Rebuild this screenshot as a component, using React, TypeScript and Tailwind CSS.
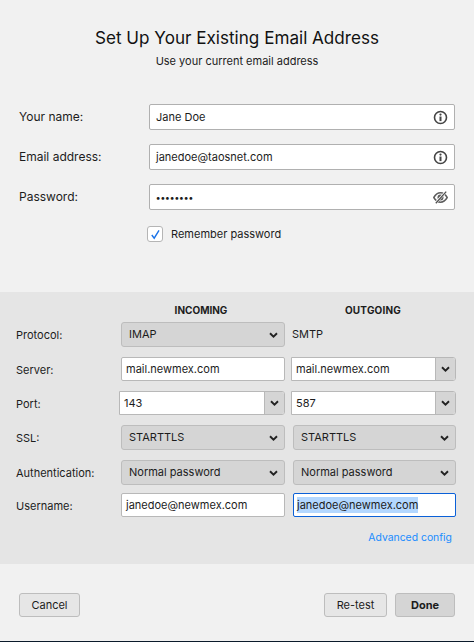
import React from "react";

const Chev = () => (
  <svg width="9" height="6" viewBox="0 0 9 6" className="shrink-0">
    <path d="M1 1.2 L4.5 4.6 L8 1.2" fill="none" stroke="#222" strokeWidth="1.9" />
  </svg>
);

const Info = () => (
  <svg width="15" height="15" viewBox="0 0 15 15" className="shrink-0">
    <circle cx="7.5" cy="7.5" r="6" fill="none" stroke="#444" strokeWidth="1.6" />
    <circle cx="7.5" cy="4.6" r="1.1" fill="#444" />
    <rect x="6.5" y="6.5" width="2" height="4.6" fill="#444" />
  </svg>
);

const EyeOff = () => (
  <svg width="15" height="13" viewBox="0 0 15 13" className="shrink-0">
    <path d="M0.8 6.5 C3 2.8 5.3 1.8 7.5 1.8 C9.7 1.8 12 2.8 14.2 6.5 C12 10.2 9.7 11.2 7.5 11.2 C5.3 11.2 3 10.2 0.8 6.5 Z" fill="none" stroke="#5c5c5c" strokeWidth="1.5" />
    <circle cx="7.5" cy="6.5" r="3" fill="#5c5c5c" />
    <path d="M2.4 12.4 L13 0.6" stroke="#fff" strokeWidth="2.4" />
    <path d="M2.8 12.2 L13.2 0.6" stroke="#4f4f4f" strokeWidth="1.3" />
  </svg>
);

const TopField = ({ label, value, icon, mt }: { label: string; value: React.ReactNode; icon: React.ReactNode; mt: string }) => (
  <div className={`flex items-center ${mt}`}>
    <div className="w-[130px] -mt-[1px] text-[12px] text-[#1c1c1c]">{label}</div>
    <div className="flex h-[26px] w-[306px] items-center justify-between rounded-[2px] border border-[#b0b0b0] bg-white pl-[6px] pr-[6px] text-[11px] text-[#1c1c1c]">
      <span>{value}</span>
      {icon}
    </div>
  </div>
);

const Select = ({ value, w = "w-[164px]" }: { value: string; w?: string }) => (
  <div className={`flex h-[25px] ${w} items-center justify-between rounded-[3px] border border-[#bdbdbd] bg-[#d5d5d5] pl-[7px] pr-[6px] text-[11px] text-[#1c1c1c]`}>
    <span>{value}</span>
    <Chev />
  </div>
);

const TextBox = ({ value, w = "w-[164px]" }: { value: string; w?: string }) => (
  <div className={`flex h-[24px] ${w} items-center rounded-[2px] border border-[#b8b8b8] bg-white pl-[4px] text-[11px] text-[#1c1c1c]`}>
    <span className="mt-[1px]">{value}</span>
  </div>
);

const Combo = ({ value, w }: { value: string; w: string }) => (
  <div className={`flex h-[24px] ${w} items-center overflow-hidden rounded-r-[3px] border border-[#b8b8b8] bg-white text-[11px] text-[#1c1c1c]`}>
    <span className="mt-[1px] flex-1 pl-[4px]">{value}</span>
    <span className="flex h-[24px] w-[20px] items-center justify-center border-l border-[#b8b8b8] bg-[#d5d5d5]">
      <Chev />
    </span>
  </div>
);

const Row = ({ label, children, h, mt }: { label: string; children: React.ReactNode; h: string; mt: string }) => (
  <div className={`flex ${h} ${mt} items-center`}>
    <div className="mt-[2px] w-[103px] pl-[16px] text-[11px] text-[#1c1c1c]">{label}</div>
    {children}
  </div>
);

const Btn = ({ children, w, bold, dark }: { children: string; w: string; bold?: boolean; dark?: boolean }) => (
  <div className={`flex h-[24px] ${w} items-center justify-center rounded-[3px] border border-[#bdbdbd] text-[11px] text-[#1c1c1c] ${dark ? "bg-[#d5d5d5]" : "bg-[#e6e6e6]"} ${bold ? "font-bold" : ""}`}>
    <span className="mt-[1px]">{children}</span>
  </div>
);

export default function App() {
  return (
    <div className="flex h-[642px] w-[474px] flex-col overflow-hidden border-b border-[#0b1a2b] bg-[#f1f1f1] font-['Inter',sans-serif]">
      <div className="h-[292px] shrink-0 pl-[19px] pt-[27px]">
        <div className="-ml-[19px] text-center text-[17.1px] leading-[22px] text-[#111]">Set Up Your Existing Email Address</div>
        <div className="-ml-[19px] mt-[5px] text-center text-[11px] leading-[14px] text-[#1c1c1c]">Use your current email address</div>
        <TopField mt="mt-[36px]" label="Your name:" value="Jane Doe" icon={<Info />} />
        <TopField mt="mt-[14px]" label="Email address:" value="janedoe@taosnet.com" icon={<Info />} />
        <TopField
          mt="mt-[14px]"
          label="Password:"
          value={<span className="text-[9px] font-bold tracking-[0.4px]">••••••••</span>}
          icon={<EyeOff />}
        />
        <div className="ml-[128px] mt-[16px] flex items-center">
          <div className="flex h-[16px] w-[16px] items-center justify-center rounded-[3px] border border-[#b5b5b5] bg-white">
            <svg width="11" height="11" viewBox="0 0 11 11">
              <path d="M1.8 6 L4.2 9.2 L9 1.4" fill="none" stroke="#1a73e8" strokeWidth="1.4" />
            </svg>
          </div>
          <span className="ml-[8px] text-[11px] text-[#1c1c1c]">Remember password</span>
        </div>
      </div>

      <div className="h-[272px] shrink-0 bg-[#e5e5e5] pt-[11px]">
        <div className="flex h-[14px] items-center text-[10px] font-bold leading-[14px] text-[#1c1c1c]">
          <div className="w-[119px]" />
          <div className="w-[164px] text-center">INCOMING</div>
          <div className="ml-[8px] w-[164px] text-center tracking-[0.2px]">OUTGOING</div>
        </div>
        <Row label="Protocol:" h="h-[25px]" mt="mt-[5px]">
          <div className="ml-[18px]">
            <Select value="IMAP" />
          </div>
          <span className="ml-[7px] text-[11px] text-[#1c1c1c]">SMTP</span>
        </Row>
        <Row label="Server:" h="h-[24px]" mt="mt-[10px]">
          <div className="ml-[18px]">
            <TextBox value="mail.newmex.com" />
          </div>
          <div className="ml-[6px]">
            <Combo value="mail.newmex.com" w="w-[165px]" />
          </div>
        </Row>
        <Row label="Port:" h="h-[24px]" mt="mt-[10px]">
          <div className="ml-[16px]">
            <Combo value="143" w="w-[166px]" />
          </div>
          <div className="ml-[6px]">
            <Combo value="587" w="w-[165px]" />
          </div>
        </Row>
        <Row label="SSL:" h="h-[25px]" mt="mt-[10px]">
          <div className="ml-[18px]">
            <Select value="STARTTLS" />
          </div>
          <div className="ml-[8px]">
            <Select value="STARTTLS" w="w-[163px]" />
          </div>
        </Row>
        <Row label="Authentication:" h="h-[25px]" mt="mt-[10px]">
          <div className="ml-[18px]">
            <Select value="Normal password" />
          </div>
          <div className="ml-[8px]">
            <Select value="Normal password" w="w-[163px]" />
          </div>
        </Row>
        <Row label="Username:" h="h-[24px]" mt="mt-[8px]">
          <div className="ml-[18px]">
            <TextBox value="janedoe@newmex.com" />
          </div>
          <div className="ml-[8px] flex h-[24px] w-[163px] items-center rounded-[2px] border border-[#0a60d8] bg-white pl-[3px] text-[11px] text-[#1c1c1c]">
            <span className="bg-[#b3d7ff]">janedoe@newmex.com</span>
          </div>
        </Row>
        <div className="mt-[14px] pr-[22px] text-right text-[10.4px] leading-[14px] text-[#1a8cff]">Advanced config</div>
      </div>

      <div className="flex flex-1 items-start px-[19px] pt-[29px]">
        <Btn w="w-[61px]">Cancel</Btn>
        <div className="flex-1" />
        <Btn w="w-[63px]">Re-test</Btn>
        <div className="ml-[8px]">
          <Btn w="w-[60px]" bold dark>Done</Btn>
        </div>
      </div>
    </div>
  );
}
